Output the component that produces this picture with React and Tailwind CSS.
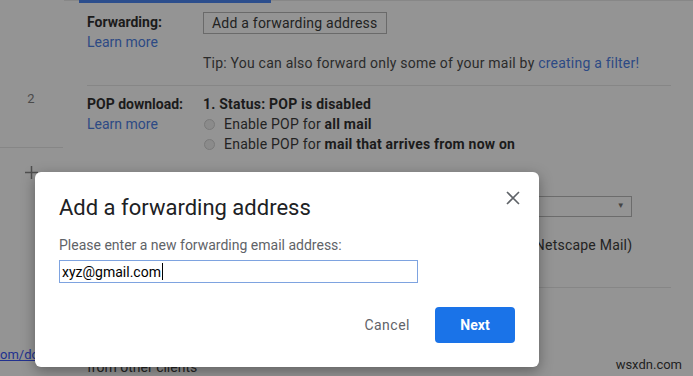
import React from 'react';

function Radio() {
  return (
    <span className="mr-[9px] inline-block h-[11px] w-[11px] rounded-full border border-[#7a7a7a] bg-[#8b8b8b]" />
  );
}

export default function App() {
  return (
    <div className="relative h-[376px] w-[693px] overflow-hidden bg-[#949494] font-['Roboto',sans-serif] text-[14px] text-[#232323]">
      <div className="flex h-full">
        {/* left rail */}
        <aside className="flex w-[64px] shrink-0 flex-col">
          <div className="h-[147px] w-[62px] pt-[90px] text-center text-[13px] leading-[18px] text-[#4a4a4a]">
            2
          </div>
          <div className="w-[63px] border-t border-[#868686]" />
          <div className="mt-[18px] flex w-[62px] justify-center">
            <svg width="13" height="13" viewBox="0 0 13 13">
              <path d="M6.5 0v13M0 6.5h13" stroke="#4f4f4f" strokeWidth="1.5" fill="none" />
            </svg>
          </div>
          <div className="mt-[168px] whitespace-nowrap text-[13px] leading-[16px] text-[#22318f] underline">
            om/docs/answer
          </div>
        </aside>

        {/* settings */}
        <main className="flex flex-1 flex-col">
          <div className="h-[3px] border-t border-[#878787]">
            <div className="-mt-px ml-[15px] h-[3px] w-[192px] bg-[#2c4e8d]" />
          </div>

          <div className="pl-[23px] pr-[22px]">
            <section className="flex h-[83px] border-b border-[#868686] pt-[9px]">
              <div className="w-[116px] shrink-0 leading-[20px]">
                <div className="font-bold text-[#1b1b1b]">Forwarding:</div>
                <div className="text-[#2d4a84]">Learn more</div>
              </div>
              <div className="tracking-[0.22px]">
                <div className="inline-block h-[22px] border border-[#6a6a6a] px-[8px] leading-[20px] text-[#222]">
                  Add a forwarding address
                </div>
                <div className="mt-[19px] leading-[20px] text-[#2b2b2b]">
                  Tip: You can also forward only some of your mail by{' '}
                  <span className="text-[#2d4a84]">creating a filter!</span>
                </div>
              </div>
            </section>

            <section className="flex h-[202px] border-b border-[#868686] pt-[8px] leading-[20px]">
              <div className="w-[116px] shrink-0">
                <div className="font-bold text-[#1b1b1b]">POP download:</div>
                <div className="text-[#2d4a84]">Learn more</div>
              </div>
              <div className="flex-1 tracking-[0.22px]">
                <div className="font-bold text-[#1b1b1b]">1. Status: POP is disabled</div>
                <div className="flex items-center pl-[1px]">
                  <Radio />
                  Enable POP for&nbsp;<b className="text-[#1b1b1b]">all mail</b>
                </div>
                <div className="flex items-center pl-[1px]">
                  <Radio />
                  Enable POP for&nbsp;<b className="text-[#1b1b1b]">mail that arrives from now on</b>
                </div>
                <div className="mt-[22px]">2. When messages are accessed with POP</div>
                <div className="flex h-[20px] items-center pl-[15px]">
                  <div className="flex h-[21px] w-[414px] items-center justify-between border border-[#6c6c6c] pl-[4px] pr-[6px] text-[13px]">
                    <span>keep Gmail's copy in the Inbox</span>
                    <span className="text-[8px] text-[#444]">▼</span>
                  </div>
                </div>
                <div className="mt-[19px] whitespace-nowrap">
                  3. Configure your email client (e.g. Outlook, Eudora, Netscape Mail)
                </div>
                <div className="text-[#2d4a84]">Configuration instructions</div>
              </div>
            </section>

            <section className="flex pt-[9px] leading-[20px]">
              <div className="w-[116px] shrink-0">
                <div className="font-bold text-[#1b1b1b]">IMAP access:</div>
                <div className="text-[#2d4a84]">Learn more</div>
                <div>(access Gmail</div>
                <div>from other clients</div>
              </div>
            </section>
          </div>
        </main>
      </div>

      {/* dialog */}
      <div className="absolute left-[35px] top-[172px] h-[195px] w-[504px] rounded-[6px] bg-white px-[24px] pt-[22px] shadow-[0_4px_14px_rgba(0,0,0,0.35)]">
        <button type="button" className="absolute right-[19px] top-[19px] flex h-[14px] w-[14px] items-center justify-center">
          <svg width="14" height="14" viewBox="0 0 14 14">
            <path d="M1 1l12 12M13 1L1 13" stroke="#5f6368" strokeWidth="1.6" fill="none" />
          </svg>
        </button>
        <h2 className="text-[22px] leading-[28px] text-[#202124]">Add a forwarding address</h2>
        <p className="mt-[13px] leading-[20px] text-[#5f6368]">
          Please enter a new forwarding email address:
        </p>
        <div className="mt-[5px] flex h-[23px] w-[359px] items-center border border-[#7ea3e0] pl-[2px] leading-[20px] text-black">
          xyz@gmail.com
          <span className="ml-px h-[17px] border-l border-black" />
        </div>
        <div className="mt-[24px] flex justify-end gap-[9px]">
          <button type="button" className="h-[36px] px-[16px] tracking-[0.5px] text-[#5f6368]">
            Cancel
          </button>
          <button type="button" className="h-[36px] w-[80px] rounded-[4px] bg-[#1a73e8] font-bold text-white">
            Next
          </button>
        </div>
      </div>

      <div className="absolute bottom-[3px] right-[11px] text-[13px] leading-[16px] text-[#1f1f1f]">
        wsxdn.com
      </div>
    </div>
  );
}
